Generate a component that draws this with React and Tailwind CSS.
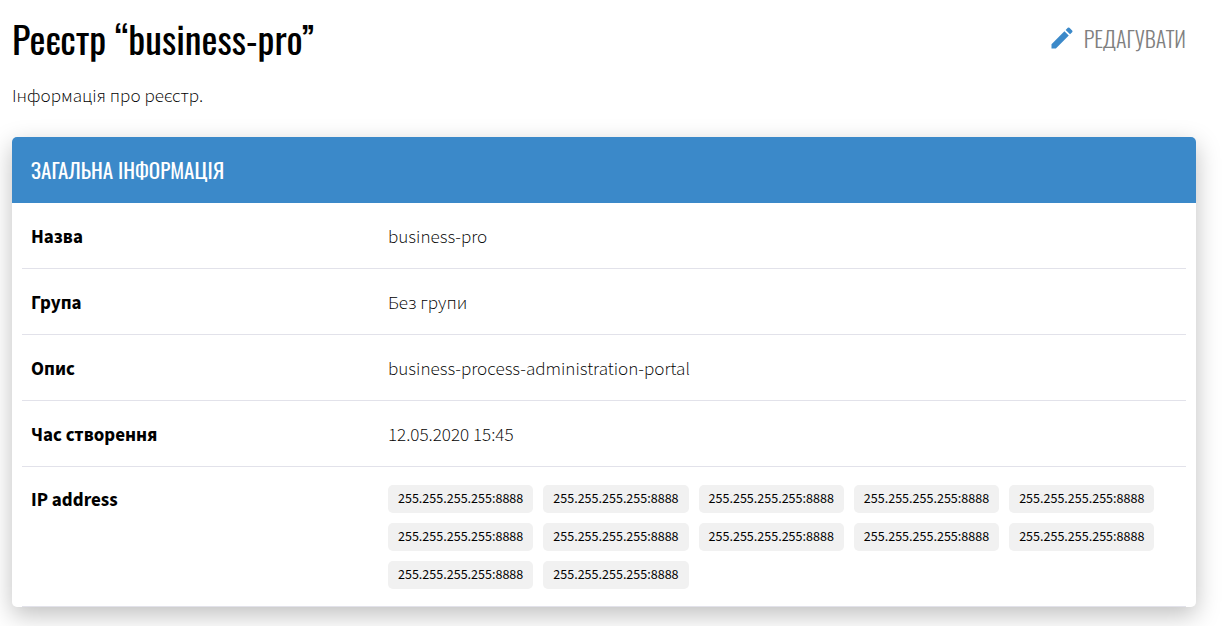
import { MdEdit } from "react-icons/md";

const display = "font-['Oswald','Roboto_Condensed','Liberation_Sans',sans-serif]";
const body = "font-['Source_Sans_3','Noto_Sans_CJK_SC','Noto_Sans',sans-serif]";

const rows = [
  { label: "Назва", value: "business-pro" },
  { label: "Група", value: "Без групи" },
  { label: "Опис", value: "business-process-administration-portal" },
  { label: "Час створення", value: "12.05.2020 15:45" },
];

const addresses = Array(12).fill("255.255.255.255:8888");

export default function App() {
  return (
    <main className={`bg-white pt-[14px] pr-7 pb-5 pl-3 text-black ${body}`}>
      <header className="flex items-center justify-between pr-[10px]">
        <h1 className={`text-[38px] leading-12 ${display}`}>Реєстр “business-pro”</h1>
        <button type="button" className={`flex items-center gap-2 text-[22px] leading-8 font-light text-[#808080] ${display}`}>
          <MdEdit className="size-7 text-[#3b89c9]" aria-hidden="true" />
          РЕДАГУВАТИ
        </button>
      </header>
      <p className="mt-[23px] text-[19px] leading-6 font-light">Інформація про реєстр.</p>

      <section className="mt-7 rounded-[5px] bg-white shadow-[0_8px_24px_rgba(0,0,0,0.25)]">
        <h2 className={`rounded-t-[5px] bg-[#3b89c9] px-[19px] py-[17px] text-[21px] leading-8 font-normal text-white ${display}`}>
          ЗАГАЛЬНА ІНФОРМАЦІЯ
        </h2>
        <div className="px-[10px]">
          <table className="w-full border-collapse text-left text-[19px] leading-6">
            <tbody>
              {rows.map((row) => (
                <tr key={row.label} className="border-b border-[#e2e2ea]">
                  <th scope="row" className="w-[366px] pt-[23px] pb-[18px] pl-[9px] font-bold">
                    {row.label}
                  </th>
                  <td className="pt-[23px] pb-[18px] font-light">{row.value}</td>
                </tr>
              ))}
              <tr className="border-b border-[#e2e2ea]">
                <th scope="row" className="w-[366px] pt-[22px] pb-[18px] pl-[9px] align-top font-bold">
                  IP address
                </th>
                <td className="pt-[18px] pb-[17px]">
                  <ul className="flex flex-wrap gap-[10px]">
                    {addresses.map((address, i) => (
                      <li key={i} className="rounded-[5px] bg-[#f1f1f1] px-[10px] py-1 text-[14px] leading-5">
                        {address}
                      </li>
                    ))}
                  </ul>
                </td>
              </tr>
            </tbody>
          </table>
        </div>
      </section>
    </main>
  );
}
